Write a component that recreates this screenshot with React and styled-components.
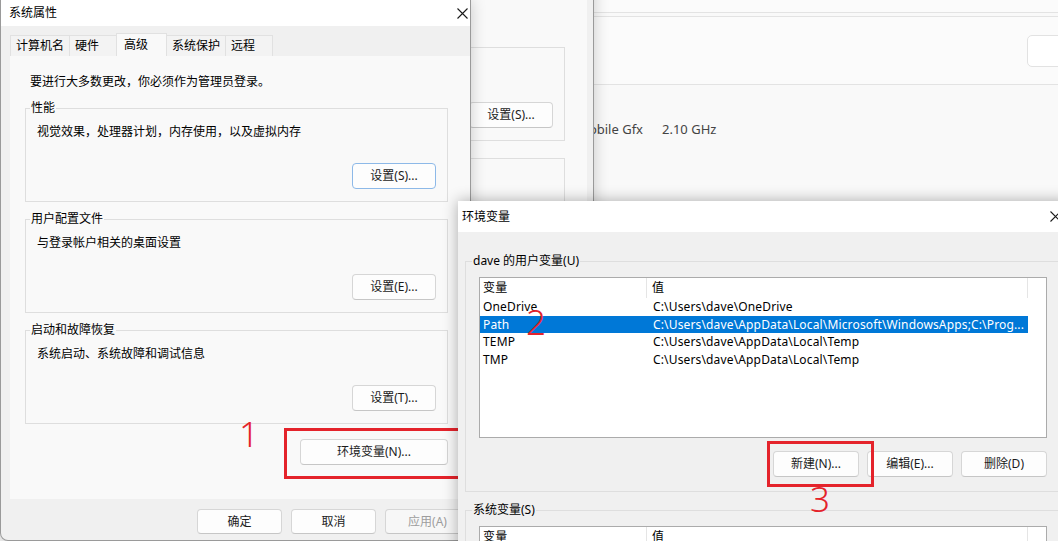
import React from "react";
import styled, { createGlobalStyle } from "styled-components";

const FONT = `"Noto Sans", "Noto Sans CJK SC", sans-serif`;
const RED = "#e4232b";

const Global = createGlobalStyle`
  html, body { margin: 0; padding: 0; background: #f3f3f3; }
  *, *::before, *::after { box-sizing: border-box; }
`;

const Desktop = styled.div`
  position: relative;
  width: 1058px;
  height: 541px;
  overflow: hidden;
  background: #f3f3f3;
  font-family: ${FONT};
  font-size: 12px;
  color: #000;
`;

/* ---------- Settings window (far back) ---------- */
const SettingsWindow = styled.div`
  position: absolute;
  left: 540px;
  top: 0;
  width: 560px;
  height: 541px;
  background: #f9f9f9;
  display: flex;
  flex-direction: column;
`;
const SettingsStrip = styled.div`
  height: 13px;
  background: #fbfbfb;
  border-bottom: 1px solid #e3e3e3;
`;
const SettingsCard = styled.div`
  margin-top: 3px;
  height: 69px;
  background: #fbfbfb;
  border-top: 1px solid #e3e3e3;
  border-bottom: 1px solid #e3e3e3;
  display: flex;
  align-items: center;
  padding-left: 487px;
`;
const SettingsButton = styled.div`
  width: 110px;
  height: 32px;
  background: #fff;
  border: 1px solid #e2e2e2;
  border-radius: 5px;
`;
const SpecRow = styled.div`
  margin-top: 34px;
  display: flex;
  align-items: center;
  gap: 19px;
  font-size: 13px;
  line-height: 20px;
  color: #444;
  white-space: nowrap;
`;
const SpecName = styled.div`
  width: 103px;
  display: flex;
  justify-content: flex-end;
  overflow: hidden;
`;

/* ---------- System properties dialog ---------- */
const DialogFrame = styled.div`
  position: absolute;
  left: ${(p) => p.$x}px;
  top: ${(p) => p.$y}px;
  width: ${(p) => p.$w}px;
  height: 541px;
  background: #f0f0f0;
  border: 1px solid #9a9a9a;
  border-top: none;
  border-radius: 0 0 8px 8px;
  box-shadow: 0 0 16px rgba(0, 0, 0, 0.2);
  display: flex;
  flex-direction: column;
  overflow: hidden;
`;
const TitleBar = styled.div`
  flex: none;
  height: ${(p) => p.$h}px;
  background: #fff;
  display: flex;
  align-items: center;
  justify-content: space-between;
  padding-left: ${(p) => p.$pl}px;
`;
const TitleText = styled.span`
  font-size: 12px;
  line-height: 16px;
`;
const CloseBox = styled.span`
  width: 14px;
  height: 14px;
  margin-right: ${(p) => p.$mr}px;
  display: flex;
  align-items: center;
  justify-content: center;
`;
const DialogBody = styled.div`
  padding: 7px 0 0 9px;
  display: flex;
  flex-direction: column;
`;
const TabRow = styled.div`
  height: 23px;
  display: flex;
  align-items: flex-end;
`;
const Tab = styled.div`
  height: ${(p) => (p.$active ? 23 : 21)}px;
  min-width: ${(p) => (p.$active ? 51 : 48)}px;
  padding: 0 5px 0 ${(p) => (p.$active ? 7 : 5)}px;
  background: ${(p) => (p.$active ? "#f9f9f9" : "#f3f3f3")};
  border: 1px solid #e1e1e1;
  border-bottom: none;
  margin-left: ${(p) => (p.$first ? 0 : -1)}px;
  display: flex;
  align-items: center;
  line-height: 16px;
  white-space: nowrap;
`;
const Panel = styled.div`
  height: 443px;
  margin-right: ${(p) => p.$gutter}px;
  background: #f9f9f9;
  padding: 18px 22px 0 15px;
  display: flex;
  flex-direction: column;
`;
const Note = styled.div`
  margin: 0 0 10px 5px;
  line-height: 16px;
`;
const Fieldset = styled.fieldset`
  margin: 0;
  min-width: 0;
  border: 1px solid #dedede;
  display: flex;
  flex-direction: column;
`;
const Legend = styled.legend`
  padding: 0 1px;
  line-height: 16px;
  font-size: 12px;
`;
const SysGroup = styled(Fieldset)`
  padding: 0 11px 12px 4px;
  & + & {
    margin-top: 9px;
  }
`;
const GroupDesc = styled.div`
  margin: 8px 0 0 7px;
  line-height: 16px;
`;
const ButtonRow = styled.div`
  margin-top: ${(p) => p.$mt}px;
  display: flex;
  justify-content: flex-end;
  gap: ${(p) => p.$gap || 0}px;
`;
const Btn = styled.div`
  width: ${(p) => p.$w}px;
  height: ${(p) => p.$h || 26}px;
  background: ${(p) => (p.$disabled ? "#f7f7f7" : "#fdfdfd")};
  border: 1px solid ${(p) => (p.$focus ? "#8db9e8" : "#d6d6d6")};
  border-bottom-color: ${(p) => (p.$focus ? "#8db9e8" : "#c6c6c6")};
  border-radius: 4px;
  color: ${(p) => (p.$disabled ? "#9d9d9d" : "#1b1b1b")};
  display: flex;
  align-items: center;
  justify-content: center;
  line-height: 16px;
  white-space: nowrap;
`;
const Footer = styled.div`
  padding-top: 10px;
  margin-right: ${(p) => p.$gutter}px;
  display: flex;
  justify-content: flex-end;
  gap: 9px;
`;

const CloseIcon = ({ size = 11 }) => (
  <svg width={size} height={size} viewBox="0 0 11 11">
    <path d="M0.5 0.5 L10.5 10.5 M10.5 0.5 L0.5 10.5" stroke="#1a1a1a" strokeWidth="1.1" fill="none" />
  </svg>
);

const groups = [
  { legend: "性能", desc: "视觉效果，处理器计划，内存使用，以及虚拟内存", btn: "设置(S)...", focus: true },
  { legend: "用户配置文件", desc: "与登录帐户相关的桌面设置", btn: "设置(E)..." },
  { legend: "启动和故障恢复", desc: "系统启动、系统故障和调试信息", btn: "设置(T)..." },
];
const tabs = ["计算机名", "硬件", "高级", "系统保护", "远程"];

function SystemProperties({ x, y, w, gutter, active }) {
  return (
    <DialogFrame $x={x} $y={y} $w={w}>
      <TitleBar $h={26} $pl={8}>
        <TitleText>系统属性</TitleText>
        <CloseBox $mr={1}>
          <CloseIcon />
        </CloseBox>
      </TitleBar>
      <DialogBody>
        <TabRow>
          {tabs.map((t, i) => (
            <Tab key={t} $active={t === "高级"} $first={i === 0}>
              {t}
            </Tab>
          ))}
        </TabRow>
        <Panel $gutter={gutter}>
          <Note>要进行大多数更改，你必须作为管理员登录。</Note>
          {groups.map((g) => (
            <SysGroup key={g.legend}>
              <Legend>{g.legend}</Legend>
              <GroupDesc>{g.desc}</GroupDesc>
              <ButtonRow $mt={23}>
                <Btn $w={84} $focus={active && g.focus}>
                  {g.btn}
                </Btn>
              </ButtonRow>
            </SysGroup>
          ))}
          <ButtonRow $mt={15}>
            <Btn $w={148}>环境变量(N)...</Btn>
          </ButtonRow>
        </Panel>
        <Footer $gutter={gutter}>
          <Btn $w={85} $h={25}>确定</Btn>
          <Btn $w={85} $h={25}>取消</Btn>
          <Btn $w={85} $h={25} $disabled>应用(A)</Btn>
        </Footer>
      </DialogBody>
    </DialogFrame>
  );
}

/* ---------- Environment variables dialog ---------- */
const EnvFrame = styled.div`
  position: absolute;
  left: 458px;
  top: 201px;
  width: 612px;
  height: 400px;
  background: #f0f0f0;
  box-shadow: 0 0 14px rgba(0, 0, 0, 0.32);
  display: flex;
  flex-direction: column;
`;
const EnvBody = styled.div`
  padding: 21px 11px 0 7px;
  display: flex;
  flex-direction: column;
`;
const VarGroup = styled(Fieldset)`
  padding: 0 11px 14px 6px;
  & + & {
    margin-top: 10px;
  }
`;
const VarList = styled.div`
  margin: 8px 0 0 7px;
  width: 568px;
  height: ${(p) => p.$h}px;
  background: #fff;
  border: 1px solid #ababab;
  flex: none;
`;
const ListRow = styled.div`
  display: flex;
  width: 548px;
  height: ${(p) => (p.$head ? 20 : 17.5)}px;
  line-height: ${(p) => (p.$head ? 20 : 17.5)}px;
  background: ${(p) => (p.$sel ? "#0078d7" : "transparent")};
  color: ${(p) => (p.$sel ? "#fff" : "#000")};
  white-space: nowrap;
  letter-spacing: 0.15px;
`;
const Cell = styled.div`
  width: ${(p) => p.$w}px;
  padding-left: ${(p) => p.$pl}px;
  overflow: hidden;
  border-right: ${(p) => (p.$head ? "1px solid #e5e5e5" : "none")};
`;

const userVars = [
  ["OneDrive", "C:\\Users\\dave\\OneDrive"],
  ["Path", "C:\\Users\\dave\\AppData\\Local\\Microsoft\\WindowsApps;C:\\Prog..."],
  ["TEMP", "C:\\Users\\dave\\AppData\\Local\\Temp"],
  ["TMP", "C:\\Users\\dave\\AppData\\Local\\Temp"],
];

function ListHeader() {
  return (
    <ListRow $head>
      <Cell $w={167} $pl={3} $head>
        变量
      </Cell>
      <Cell $w={381} $pl={5} $head>
        值
      </Cell>
    </ListRow>
  );
}

function EnvironmentVariables() {
  return (
    <EnvFrame>
      <TitleBar $h={31} $pl={4}>
        <TitleText>环境变量</TitleText>
        <CloseBox $mr={8}>
          <CloseIcon />
        </CloseBox>
      </TitleBar>
      <EnvBody>
        <VarGroup>
          <Legend>dave 的用户变量(U)</Legend>
          <VarList $h={161}>
            <ListHeader />
            {userVars.map(([k, v]) => (
              <ListRow key={k} $sel={k === "Path"}>
                <Cell $w={167} $pl={3}>{k}</Cell>
                <Cell $w={381} $pl={6}>{v}</Cell>
              </ListRow>
            ))}
          </VarList>
          <ButtonRow $mt={13} $gap={8}>
            <Btn $w={86}>新建(N)...</Btn>
            <Btn $w={86}>编辑(E)...</Btn>
            <Btn $w={86}>删除(D)</Btn>
          </ButtonRow>
        </VarGroup>
        <VarGroup>
          <Legend>系统变量(S)</Legend>
          <VarList $h={160}>
            <ListHeader />
          </VarList>
        </VarGroup>
      </EnvBody>
    </EnvFrame>
  );
}

/* ---------- Annotations ---------- */
const Callout = styled.div`
  position: absolute;
  left: ${(p) => p.$x}px;
  top: ${(p) => p.$y}px;
  width: ${(p) => p.$w}px;
  height: ${(p) => p.$h}px;
  border: 3px solid ${RED};
`;
const CalloutNum = styled.span`
  position: absolute;
  left: ${(p) => p.$x}px;
  top: ${(p) => p.$y}px;
  font-family: "Noto Sans", sans-serif;
  font-size: 35px;
  font-weight: 300;
  line-height: 1;
  color: ${RED};
`;

export default function App() {
  return (
    <>
      <Global />
      <Desktop>
        <SettingsWindow>
          <SettingsStrip />
          <SettingsCard>
            <SettingsButton />
          </SettingsCard>
          <SpecRow>
            <SpecName>
              <span>AMD Ryzen 5 3500U with Radeon Vega Mobile Gfx</span>
            </SpecName>
            <span>2.10 GHz</span>
          </SpecRow>
        </SettingsWindow>

        <SystemProperties x={117} y={-61} w={477} gutter={6} />
        <SystemProperties x={0} y={0} w={471} gutter={0} active />

        <Callout $x={284} $y={428} $w={185} $h={51} />
        <CalloutNum $x={239} $y={416}>1</CalloutNum>

        <EnvironmentVariables />

        <Callout $x={767} $y={441} $w={107} $h={46} />
        <CalloutNum $x={526} $y={304}>2</CalloutNum>
        <CalloutNum $x={810} $y={481}>3</CalloutNum>
      </Desktop>
    </>
  );
}
